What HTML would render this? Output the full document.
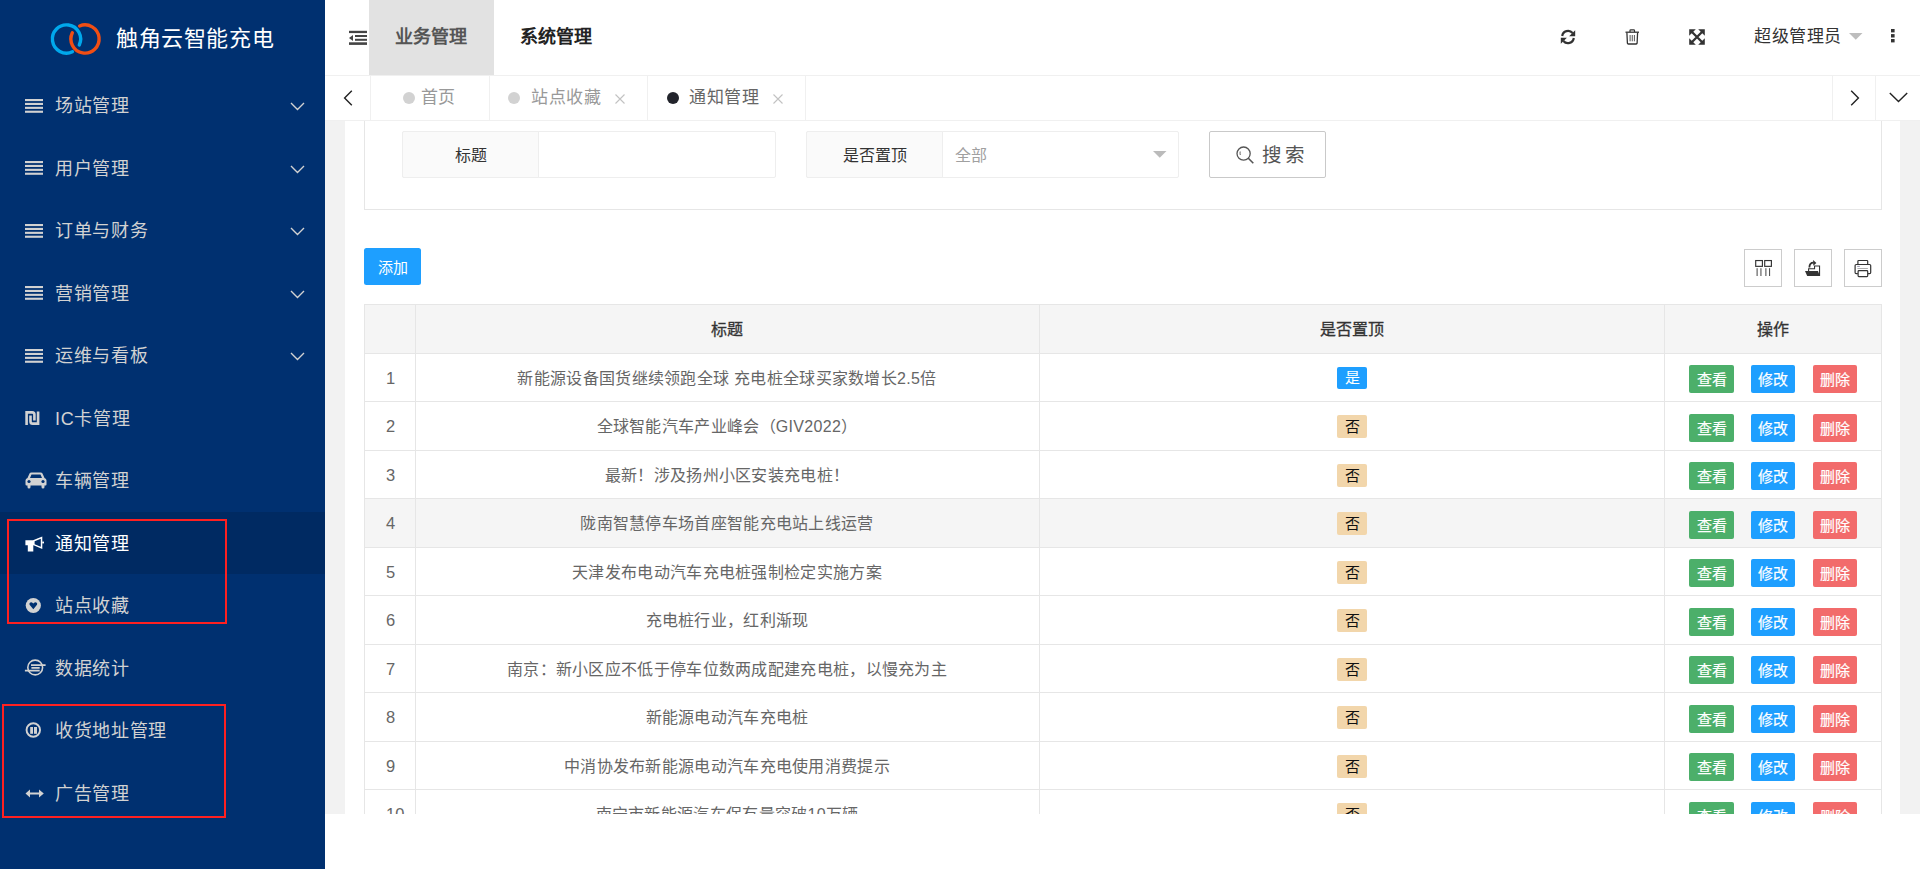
<!DOCTYPE html><html lang="zh-CN"><head><meta charset="utf-8"><style>
*{box-sizing:border-box;margin:0;padding:0}
html,body{width:1920px;height:869px;overflow:hidden;background:#fff;font-family:"Liberation Sans",sans-serif;}
.abs{position:absolute}
#side{position:absolute;left:0;top:0;width:325px;height:869px;background:#003070;}
.logo-t{position:absolute;left:116px;top:23px;font-size:22px;letter-spacing:0.6px;line-height:32px;color:#fff;white-space:nowrap}
.mi{position:absolute;left:0;width:325px;height:62.5px;}
.mi .t{position:absolute;left:55px;top:1px;line-height:62.5px;font-size:18px;letter-spacing:0.7px;color:#d2d2d2;white-space:nowrap}
.mi svg{position:absolute}
.mi.act{background:#002a62}
.mi.act .t{color:#fff}
.redbox{position:absolute;border:2px solid #ff2020}
#hdr{position:absolute;left:325px;top:0;width:1595px;height:75px;background:#fff}
#tabs{position:absolute;left:325px;top:75px;width:1595px;height:46px;background:#fff;border-top:1px solid #f0f0f0;border-bottom:1px solid #f0f0f0}
#main{position:absolute;left:325px;top:121px;width:1595px;height:693px;background:#f2f2f2;overflow:hidden}
#card{position:absolute;left:20px;top:0;width:1555px;height:693px;background:#fff;overflow:hidden}
.t1{position:absolute;white-space:nowrap}
</style></head><body>
<div id="side">
<svg class="abs" style="left:0;top:0" width="120" height="74" viewBox="0 0 120 74">
<path d="M72.46 51.78 A14.1 14.1 0 1 1 79.28 44.96" fill="none" stroke="#00a8ec" stroke-width="3.4" stroke-linecap="round"/>
<path d="M79.60 25.97 A14.1 14.1 0 1 1 72.33 32.82" fill="none" stroke="#f04e14" stroke-width="3.4" stroke-linecap="round"/>
</svg>
<div class="logo-t">触角云智能充电</div>
<div class="mi" style="top:74.0px"><svg style="left:25px;top:24.5px" width="18" height="14" viewBox="0 0 18 14"><rect x="0" y="0" width="18" height="2.1" fill="#d2d2d2"/><rect x="0" y="3.9" width="18" height="2.1" fill="#d2d2d2"/><rect x="0" y="7.8" width="18" height="2.1" fill="#d2d2d2"/><rect x="0" y="11.7" width="18" height="2.1" fill="#d2d2d2"/></svg><span class="t">场站管理</span><svg style="left:289px;top:27px" width="17" height="10" viewBox="0 0 17 10"><path d="M2 2 L8.5 8.5 L15 2" fill="none" stroke="#d2d2d2" stroke-width="1.4"/></svg></div>
<div class="mi" style="top:136.5px"><svg style="left:25px;top:24.5px" width="18" height="14" viewBox="0 0 18 14"><rect x="0" y="0" width="18" height="2.1" fill="#d2d2d2"/><rect x="0" y="3.9" width="18" height="2.1" fill="#d2d2d2"/><rect x="0" y="7.8" width="18" height="2.1" fill="#d2d2d2"/><rect x="0" y="11.7" width="18" height="2.1" fill="#d2d2d2"/></svg><span class="t">用户管理</span><svg style="left:289px;top:27px" width="17" height="10" viewBox="0 0 17 10"><path d="M2 2 L8.5 8.5 L15 2" fill="none" stroke="#d2d2d2" stroke-width="1.4"/></svg></div>
<div class="mi" style="top:199.0px"><svg style="left:25px;top:24.5px" width="18" height="14" viewBox="0 0 18 14"><rect x="0" y="0" width="18" height="2.1" fill="#d2d2d2"/><rect x="0" y="3.9" width="18" height="2.1" fill="#d2d2d2"/><rect x="0" y="7.8" width="18" height="2.1" fill="#d2d2d2"/><rect x="0" y="11.7" width="18" height="2.1" fill="#d2d2d2"/></svg><span class="t">订单与财务</span><svg style="left:289px;top:27px" width="17" height="10" viewBox="0 0 17 10"><path d="M2 2 L8.5 8.5 L15 2" fill="none" stroke="#d2d2d2" stroke-width="1.4"/></svg></div>
<div class="mi" style="top:261.5px"><svg style="left:25px;top:24.5px" width="18" height="14" viewBox="0 0 18 14"><rect x="0" y="0" width="18" height="2.1" fill="#d2d2d2"/><rect x="0" y="3.9" width="18" height="2.1" fill="#d2d2d2"/><rect x="0" y="7.8" width="18" height="2.1" fill="#d2d2d2"/><rect x="0" y="11.7" width="18" height="2.1" fill="#d2d2d2"/></svg><span class="t">营销管理</span><svg style="left:289px;top:27px" width="17" height="10" viewBox="0 0 17 10"><path d="M2 2 L8.5 8.5 L15 2" fill="none" stroke="#d2d2d2" stroke-width="1.4"/></svg></div>
<div class="mi" style="top:324.0px"><svg style="left:25px;top:24.5px" width="18" height="14" viewBox="0 0 18 14"><rect x="0" y="0" width="18" height="2.1" fill="#d2d2d2"/><rect x="0" y="3.9" width="18" height="2.1" fill="#d2d2d2"/><rect x="0" y="7.8" width="18" height="2.1" fill="#d2d2d2"/><rect x="0" y="11.7" width="18" height="2.1" fill="#d2d2d2"/></svg><span class="t">运维与看板</span><svg style="left:289px;top:27px" width="17" height="10" viewBox="0 0 17 10"><path d="M2 2 L8.5 8.5 L15 2" fill="none" stroke="#d2d2d2" stroke-width="1.4"/></svg></div>
<div class="mi" style="top:386.5px"><svg style="left:24.5px;top:24.3px" width="15" height="15" viewBox="0 0 15 15"><path d="M1.6 14 V1.4 H7.2 Q9.4 1.4 9.4 3.6 V9.6" fill="none" stroke="#d2d2d2" stroke-width="2.6"/><path d="M13.1 0.4 V12.6 H7.7 Q5.5 12.6 5.5 10.4 V4.4" fill="none" stroke="#d2d2d2" stroke-width="2.6"/></svg><span class="t">IC卡管理</span></div>
<div class="mi" style="top:449.0px"><svg style="left:24.5px;top:23px" width="22" height="17" viewBox="0 0 22 17"><path d="M4.5 1.5 Q5 0.5 6.5 0.5 H15.5 Q17 0.5 17.5 1.5 L19.5 6 Q21.5 6.5 21.5 8.5 V12.5 Q21.5 13.5 20.5 13.5 H19.5 V15 Q19.5 16.5 18 16.5 Q16.5 16.5 16.5 15 V13.5 H5.5 V15 Q5.5 16.5 4 16.5 Q2.5 16.5 2.5 15 V13.5 H1.5 Q0.5 13.5 0.5 12.5 V8.5 Q0.5 6.5 2.5 6 Z M6.5 2.5 L5 6 H17 L15.5 2.5 Z" fill="#d2d2d2" fill-rule="evenodd"/><circle cx="4" cy="9.5" r="1.6" fill="#003070"/><circle cx="18" cy="9.5" r="1.6" fill="#003070"/></svg><span class="t">车辆管理</span></div>
<div class="mi act" style="top:511.5px"><svg style="left:24.5px;top:23px" width="20" height="18" viewBox="0 0 20 18"><path d="M0.4 5.2 H8 L17.3 1.4 V14.1 L8.6 10.3 H8.3 V16.5 H2.8 V10.3 H0.4 Z M9.6 6.3 V9.2 L15.8 11.8 V3.7 Z" fill="#fff" fill-rule="evenodd"/><rect x="17.2" y="6.6" width="1.8" height="1.8" fill="#fff"/></svg><span class="t">通知管理</span></div>
<div class="mi" style="top:574.0px"><svg style="left:24.5px;top:23px" width="17" height="17" viewBox="0 0 17 17"><circle cx="8.3" cy="8.5" r="7.6" fill="#d2d2d2"/><path d="M8.3 12.2 L4.6 7.8 Q4 6.6 4.9 5.7 Q5.9 4.9 7 5.5 L8.3 6.5 L9.6 5.5 Q10.7 4.9 11.7 5.7 Q12.6 6.6 12 7.8 Z" fill="#003070"/></svg><span class="t">站点收藏</span></div>
<div class="mi" style="top:636.5px"><svg style="left:18px;top:15.5px" width="34" height="30" viewBox="0 0 34 30"><circle cx="17.2" cy="15.5" r="7.4" fill="none" stroke="#d2d2d2" stroke-width="1.6"/><path d="M13 13.1 H27.6 M13.4 15.9 H21.7 M6.9 18.6 H21.7" stroke="#d2d2d2" stroke-width="1.6"/></svg><span class="t">数据统计</span></div>
<div class="mi" style="top:699.0px"><svg style="left:24.5px;top:23px" width="17" height="17" viewBox="0 0 17 17"><circle cx="8.3" cy="8" r="6.75" fill="none" stroke="#d2d2d2" stroke-width="1.9"/><rect x="5.2" y="5" width="2.8" height="6.8" fill="#d2d2d2"/><rect x="9" y="5" width="3" height="6.8" fill="#d2d2d2"/></svg><span class="t">收货地址管理</span></div>
<div class="mi" style="top:761.5px"><svg style="left:24.5px;top:27px" width="20" height="9" viewBox="0 0 20 9"><path d="M0.5 4.5 L5 0.6 V3.4 H14 V0.6 L18.8 4.5 L14 8.4 V5.6 H5 V8.4 Z" fill="#d2d2d2"/></svg><span class="t">广告管理</span></div>
<div class="redbox" style="left:7px;top:519px;width:220px;height:105px"></div>
<div class="redbox" style="left:2px;top:704px;width:224px;height:114px"></div>
</div>
<div id="hdr">
<svg class="abs" style="left:24px;top:30px" width="19" height="16" viewBox="0 0 19 16"><rect x="0" y="0.8" width="18" height="2.3" fill="#444"/><rect x="6" y="5" width="12" height="2" fill="#444"/><rect x="6" y="8.8" width="12" height="2" fill="#444"/><rect x="0" y="12.3" width="18" height="2.6" fill="#444"/><path d="M0 8 L4 5 V11 Z" fill="#444"/></svg>
<div class="abs" style="left:44px;top:0;width:125px;height:75px;background:#e2e2e2"></div>
<div class="t1" style="left:70px;top:0;line-height:74px;font-size:18px;font-weight:bold;color:#555">业务管理</div>
<div class="t1" style="left:195px;top:0;line-height:74px;font-size:18px;font-weight:bold;color:#222">系统管理</div>
<svg class="abs" style="left:1235px;top:28.5px" width="16" height="16" viewBox="0 0 16 16"><path d="M2.2 7 A5.9 5.9 0 0 1 12.6 4" fill="none" stroke="#333" stroke-width="2.2"/><path d="M15.2 1.2 V7.3 H9.1 Z" fill="#333"/><path d="M13.8 9 A5.9 5.9 0 0 1 3.4 12" fill="none" stroke="#333" stroke-width="2.2"/><path d="M0.8 14.8 V8.7 H6.9 Z" fill="#333"/></svg>
<svg class="abs" style="left:1300px;top:28.5px" width="15" height="16" viewBox="0 0 15 16"><path d="M0.5 3.2 H14" stroke="#333" stroke-width="1.3"/><path d="M5 3 V1.6 Q5 0.8 5.8 0.8 H8.7 Q9.5 0.8 9.5 1.6 V3" fill="none" stroke="#333" stroke-width="1.2"/><path d="M1.9 3.5 L2.4 14.2 Q2.5 15 3.3 15 H11.2 Q12 15 12.1 14.2 L12.6 3.5" fill="none" stroke="#333" stroke-width="1.3"/><path d="M5.1 6 V12.3 M7.25 6 V12.3 M9.4 6 V12.3" stroke="#555" stroke-width="1"/></svg>
<svg class="abs" style="left:1364px;top:28.5px" width="16" height="16" viewBox="0 0 16 16"><path d="M0.2 0.2 H6.8 L0.2 6.8 Z M15.8 0.2 V6.8 L9.2 0.2 Z M0.2 15.8 V9.2 L6.8 15.8 Z M15.8 15.8 H9.2 L15.8 9.2 Z" fill="#333"/><path d="M2.5 2.5 L13.5 13.5 M13.5 2.5 L2.5 13.5" stroke="#333" stroke-width="2.3"/></svg>
<div class="t1" style="left:1429px;top:0;line-height:74px;font-size:17px;letter-spacing:0.5px;color:#333">超级管理员</div>
<svg class="abs" style="left:1524px;top:33px" width="14" height="7" viewBox="0 0 14 7"><path d="M0 0 H13.5 L6.75 6.8 Z" fill="#bdbdbd"/></svg>
<svg class="abs" style="left:1566px;top:29px" width="4" height="14" viewBox="0 0 4 14"><rect x="0" y="0" width="3.6" height="3.4" fill="#333"/><rect x="0" y="5.1" width="3.6" height="3.4" fill="#333"/><rect x="0" y="10" width="3.6" height="3.4" fill="#333"/></svg>
</div>
<div id="tabs">
<div class="abs" style="left:45px;top:0;width:1px;height:44px;background:#f0f0f0"></div>
<div class="abs" style="left:164px;top:0;width:1px;height:44px;background:#f0f0f0"></div>
<div class="abs" style="left:322px;top:0;width:1px;height:44px;background:#f0f0f0"></div>
<div class="abs" style="left:480px;top:0;width:1px;height:44px;background:#f0f0f0"></div>
<div class="abs" style="left:1507px;top:0;width:1px;height:44px;background:#f0f0f0"></div>
<div class="abs" style="left:1550px;top:0;width:1px;height:44px;background:#f0f0f0"></div>
<svg class="abs" style="left:18px;top:14px" width="10" height="16" viewBox="0 0 10 16"><path d="M8.8 0.8 L1.6 8 L8.8 15.2" fill="none" stroke="#222" stroke-width="1.4"/></svg>
<div class="abs" style="left:78px;top:15.5px;width:12px;height:12px;border-radius:50%;background:#d2d2d2"></div><div class="t1" style="left:95.5px;top:0;line-height:43px;font-size:17px;letter-spacing:0.6px;color:#999">首页</div>
<div class="abs" style="left:183px;top:15.5px;width:12px;height:12px;border-radius:50%;background:#d2d2d2"></div><div class="t1" style="left:206px;top:0;line-height:43px;font-size:17px;letter-spacing:0.6px;color:#999">站点收藏</div><svg class="abs" style="left:290px;top:17.5px" width="10" height="10" viewBox="0 0 10 10"><path d="M0.5 0.5 L9.5 9.5 M9.5 0.5 L0.5 9.5" stroke="#c2c2c2" stroke-width="1.1"/></svg>
<div class="abs" style="left:342px;top:15.5px;width:12px;height:12px;border-radius:50%;background:#22242c"></div><div class="t1" style="left:364px;top:0;line-height:43px;font-size:17px;letter-spacing:0.6px;color:#666">通知管理</div><svg class="abs" style="left:448px;top:17.5px" width="10" height="10" viewBox="0 0 10 10"><path d="M0.5 0.5 L9.5 9.5 M9.5 0.5 L0.5 9.5" stroke="#c2c2c2" stroke-width="1.1"/></svg>
<svg class="abs" style="left:1525px;top:14px" width="10" height="16" viewBox="0 0 10 16"><path d="M1.2 0.8 L8.4 8 L1.2 15.2" fill="none" stroke="#222" stroke-width="1.4"/></svg>
<svg class="abs" style="left:1564px;top:16px" width="19" height="11" viewBox="0 0 19 11"><path d="M0.8 1 L9.5 9.6 L18.2 1" fill="none" stroke="#222" stroke-width="1.4"/></svg>
</div>
<div id="main"><div id="card">
<div class="abs" style="left:19px;top:-10px;width:1518px;height:99px;border:1px solid #e6e6e6"></div>
<div class="abs" style="left:57px;top:10px;width:374px;height:47px;border:1px solid #eee;border-radius:2px;background:#fff"></div>
<div class="abs" style="left:57px;top:10px;width:137px;height:47px;border:1px solid #eee;border-radius:2px 0 0 2px;background:#fafafa"></div>
<div class="t1" style="left:57px;top:10px;width:137px;text-align:center;line-height:50px;font-size:16px;color:#333">标题</div>
<div class="abs" style="left:461px;top:10px;width:373px;height:47px;border:1px solid #eee;border-radius:2px;background:#fff"></div>
<div class="abs" style="left:461px;top:10px;width:137px;height:47px;border:1px solid #eee;border-radius:2px 0 0 2px;background:#fafafa"></div>
<div class="t1" style="left:461px;top:10px;width:137px;text-align:center;line-height:50px;font-size:16px;color:#333">是否置顶</div>
<div class="t1" style="left:610px;top:10px;line-height:50px;font-size:16px;color:#a0a0a0">全部</div>
<svg class="abs" style="left:808px;top:30px" width="14" height="7" viewBox="0 0 14 7"><path d="M0 0 H13.5 L6.75 6.8 Z" fill="#bbb"/></svg>
<div class="abs" style="left:864px;top:10px;width:117px;height:47px;border:1px solid #c9c9c9;border-radius:2px;background:#fff"></div>
<svg class="abs" style="left:891px;top:25px" width="19" height="19" viewBox="0 0 19 19"><circle cx="7.6" cy="7.6" r="6.6" fill="none" stroke="#555" stroke-width="1.3"/><path d="M12.3 12.3 L17.3 17.3" stroke="#555" stroke-width="1.6"/><path d="M4.2 5.5 Q3.8 7 4.3 9" fill="none" stroke="#555" stroke-width="0.9"/></svg>
<div class="t1" style="left:917px;top:10px;line-height:49px;font-size:19.5px;letter-spacing:2.5px;color:#555">搜索</div>
<div class="abs" style="left:19px;top:127px;width:57px;height:37px;border-radius:2.5px;background:#1e9fff;color:#fff;font-size:15px;line-height:39px;text-align:center">添加</div>
<div class="abs" style="left:1399px;top:128px;width:38px;height:38px;border:1px solid #ccc"></div>
<div class="abs" style="left:1449px;top:128px;width:38px;height:38px;border:1px solid #ccc"></div>
<div class="abs" style="left:1499px;top:128px;width:38px;height:38px;border:1px solid #ccc"></div>
<svg class="abs" style="left:1405px;top:134px" width="26" height="26" viewBox="0 0 26 26"><rect x="5.7" y="5.55" width="6.7" height="5.8" fill="none" stroke="#333" stroke-width="1.15"/><rect x="14.7" y="5.55" width="6.7" height="5.8" fill="none" stroke="#333" stroke-width="1.15"/><path d="M7.1 13.2 V21 M10.95 13.2 V21 M15.9 13.2 V21 M19.6 13.2 V21" stroke="#444" stroke-width="1"/></svg>
<svg class="abs" style="left:1455px;top:134px" width="26" height="26" viewBox="0 0 26 26"><path d="M5 15.9 H18 L19.9 21.1 H7.2 Z" fill="#333"/><path d="M8.6 16 V13.75 H14.55 V11.05 H19.55 V21" fill="none" stroke="#333" stroke-width="1.1"/><path d="M9.4 12.6 Q9.4 7.7 13.6 7.7" fill="none" stroke="#333" stroke-width="1.8"/><path d="M13.1 4.9 L16.4 8 L13.3 10.8 Z" fill="#333"/></svg>
<svg class="abs" style="left:1505px;top:134px" width="26" height="26" viewBox="0 0 26 26"><path d="M7.9 9.2 V6.2 Q7.9 5.5 8.6 5.5 H17 Q17.7 5.5 17.7 6.2 V9.2" fill="none" stroke="#333" stroke-width="1.2"/><path d="M7.8 18.6 H6.2 Q5.1 18.6 5.1 17.5 V10.6 Q5.1 9.5 6.2 9.5 H19.6 Q20.7 9.5 20.7 10.6 V17.5 Q20.7 18.6 19.6 18.6 H18" fill="none" stroke="#333" stroke-width="1.2"/><rect x="8.1" y="15.6" width="9.6" height="6" rx="0.8" fill="none" stroke="#333" stroke-width="1.2"/><path d="M7.2 11.4 H9.8" stroke="#8a8aa8" stroke-width="0.9"/><path d="M7.4 13.5 H17.9" stroke="#999" stroke-width="0.8"/></svg>
<div class="abs" style="left:19px;top:183px;width:1518px;height:536.0px;">
<div class="abs" style="left:0;top:0;width:100%;height:48.5px;background:#f5f5f5"></div>
<div class="abs" style="left:0;top:194.14999999999998px;width:100%;height:48.55px;background:#f5f5f5"></div>
<div class="abs" style="left:0;top:0;width:100%;height:536.0px;border:1px solid #e6e6e6;border-bottom:none"></div>
<div class="abs" style="left:0;top:48.5px;width:100%;height:1px;background:#e6e6e6"></div>
<div class="abs" style="left:0;top:97.05px;width:100%;height:1px;background:#e6e6e6"></div>
<div class="abs" style="left:0;top:145.6px;width:100%;height:1px;background:#e6e6e6"></div>
<div class="abs" style="left:0;top:194.14999999999998px;width:100%;height:1px;background:#e6e6e6"></div>
<div class="abs" style="left:0;top:242.7px;width:100%;height:1px;background:#e6e6e6"></div>
<div class="abs" style="left:0;top:291.25px;width:100%;height:1px;background:#e6e6e6"></div>
<div class="abs" style="left:0;top:339.79999999999995px;width:100%;height:1px;background:#e6e6e6"></div>
<div class="abs" style="left:0;top:388.34999999999997px;width:100%;height:1px;background:#e6e6e6"></div>
<div class="abs" style="left:0;top:436.9px;width:100%;height:1px;background:#e6e6e6"></div>
<div class="abs" style="left:0;top:485.45px;width:100%;height:1px;background:#e6e6e6"></div>
<div class="abs" style="left:51px;top:0;width:1px;height:536.0px;background:#e6e6e6"></div>
<div class="abs" style="left:675px;top:0;width:1px;height:536.0px;background:#e6e6e6"></div>
<div class="abs" style="left:1300px;top:0;width:1px;height:536.0px;background:#e6e6e6"></div>
<div class="t1" style="left:51px;width:624px;top:0;line-height:51.5px;text-align:center;font-size:16px;-webkit-text-stroke:0.3px #333;color:#333">标题</div>
<div class="t1" style="left:675px;width:625px;top:0;line-height:51.5px;text-align:center;font-size:16px;-webkit-text-stroke:0.3px #333;color:#333">是否置顶</div>
<div class="t1" style="left:1300px;width:218px;top:0;line-height:51.5px;text-align:center;font-size:16px;-webkit-text-stroke:0.3px #333;color:#333">操作</div>
<div class="t1" style="left:22px;top:48.5px;line-height:50.55px;font-size:16.5px;color:#666">1</div>
<div class="t1" style="left:51px;width:624px;top:48.5px;line-height:51.05px;text-align:center;font-size:16px;letter-spacing:0.3px;color:#666">新能源设备国货继续领跑全球 充电桩全球买家数增长2.5倍</div>
<div class="abs" style="left:973px;top:63.0px;width:30px;height:22px;border-radius:2px;background:#1e9fff;color:#fff;font-size:15px;line-height:22px;text-align:center">是</div>
<div class="abs" style="left:1325px;top:61.0px;width:45px;height:28px;border-radius:2px;background:#4caf6a;color:#fff;font-size:15px;line-height:29px;text-align:center;-webkit-text-stroke:0.2px #fff">查看</div>
<div class="abs" style="left:1387px;top:61.0px;width:44px;height:28px;border-radius:2px;background:#1e9fff;color:#fff;font-size:15px;line-height:29px;text-align:center;-webkit-text-stroke:0.2px #fff">修改</div>
<div class="abs" style="left:1449px;top:61.0px;width:44px;height:28px;border-radius:2px;background:#f26b6b;color:#fff;font-size:15px;line-height:29px;text-align:center;-webkit-text-stroke:0.2px #fff">删除</div>
<div class="t1" style="left:22px;top:97.05px;line-height:50.55px;font-size:16.5px;color:#666">2</div>
<div class="t1" style="left:51px;width:624px;top:97.05px;line-height:51.05px;text-align:center;font-size:16px;letter-spacing:0.3px;color:#666">全球智能汽车产业峰会（GIV2022）</div>
<div class="abs" style="left:973px;top:111.05px;width:30px;height:23px;border-radius:2px;background:#f2d6ab;color:#111;font-size:15px;line-height:23px;text-align:center">否</div>
<div class="abs" style="left:1325px;top:109.55px;width:45px;height:28px;border-radius:2px;background:#4caf6a;color:#fff;font-size:15px;line-height:29px;text-align:center;-webkit-text-stroke:0.2px #fff">查看</div>
<div class="abs" style="left:1387px;top:109.55px;width:44px;height:28px;border-radius:2px;background:#1e9fff;color:#fff;font-size:15px;line-height:29px;text-align:center;-webkit-text-stroke:0.2px #fff">修改</div>
<div class="abs" style="left:1449px;top:109.55px;width:44px;height:28px;border-radius:2px;background:#f26b6b;color:#fff;font-size:15px;line-height:29px;text-align:center;-webkit-text-stroke:0.2px #fff">删除</div>
<div class="t1" style="left:22px;top:145.6px;line-height:50.55px;font-size:16.5px;color:#666">3</div>
<div class="t1" style="left:51px;width:624px;top:145.6px;line-height:51.05px;text-align:center;font-size:16px;letter-spacing:0.3px;color:#666">最新！涉及扬州小区安装充电桩！</div>
<div class="abs" style="left:973px;top:159.6px;width:30px;height:23px;border-radius:2px;background:#f2d6ab;color:#111;font-size:15px;line-height:23px;text-align:center">否</div>
<div class="abs" style="left:1325px;top:158.1px;width:45px;height:28px;border-radius:2px;background:#4caf6a;color:#fff;font-size:15px;line-height:29px;text-align:center;-webkit-text-stroke:0.2px #fff">查看</div>
<div class="abs" style="left:1387px;top:158.1px;width:44px;height:28px;border-radius:2px;background:#1e9fff;color:#fff;font-size:15px;line-height:29px;text-align:center;-webkit-text-stroke:0.2px #fff">修改</div>
<div class="abs" style="left:1449px;top:158.1px;width:44px;height:28px;border-radius:2px;background:#f26b6b;color:#fff;font-size:15px;line-height:29px;text-align:center;-webkit-text-stroke:0.2px #fff">删除</div>
<div class="t1" style="left:22px;top:194.14999999999998px;line-height:50.55px;font-size:16.5px;color:#666">4</div>
<div class="t1" style="left:51px;width:624px;top:194.14999999999998px;line-height:51.05px;text-align:center;font-size:16px;letter-spacing:0.3px;color:#666">陇南智慧停车场首座智能充电站上线运营</div>
<div class="abs" style="left:973px;top:208.14999999999998px;width:30px;height:23px;border-radius:2px;background:#f2d6ab;color:#111;font-size:15px;line-height:23px;text-align:center">否</div>
<div class="abs" style="left:1325px;top:206.64999999999998px;width:45px;height:28px;border-radius:2px;background:#4caf6a;color:#fff;font-size:15px;line-height:29px;text-align:center;-webkit-text-stroke:0.2px #fff">查看</div>
<div class="abs" style="left:1387px;top:206.64999999999998px;width:44px;height:28px;border-radius:2px;background:#1e9fff;color:#fff;font-size:15px;line-height:29px;text-align:center;-webkit-text-stroke:0.2px #fff">修改</div>
<div class="abs" style="left:1449px;top:206.64999999999998px;width:44px;height:28px;border-radius:2px;background:#f26b6b;color:#fff;font-size:15px;line-height:29px;text-align:center;-webkit-text-stroke:0.2px #fff">删除</div>
<div class="t1" style="left:22px;top:242.7px;line-height:50.55px;font-size:16.5px;color:#666">5</div>
<div class="t1" style="left:51px;width:624px;top:242.7px;line-height:51.05px;text-align:center;font-size:16px;letter-spacing:0.3px;color:#666">天津发布电动汽车充电桩强制检定实施方案</div>
<div class="abs" style="left:973px;top:256.7px;width:30px;height:23px;border-radius:2px;background:#f2d6ab;color:#111;font-size:15px;line-height:23px;text-align:center">否</div>
<div class="abs" style="left:1325px;top:255.2px;width:45px;height:28px;border-radius:2px;background:#4caf6a;color:#fff;font-size:15px;line-height:29px;text-align:center;-webkit-text-stroke:0.2px #fff">查看</div>
<div class="abs" style="left:1387px;top:255.2px;width:44px;height:28px;border-radius:2px;background:#1e9fff;color:#fff;font-size:15px;line-height:29px;text-align:center;-webkit-text-stroke:0.2px #fff">修改</div>
<div class="abs" style="left:1449px;top:255.2px;width:44px;height:28px;border-radius:2px;background:#f26b6b;color:#fff;font-size:15px;line-height:29px;text-align:center;-webkit-text-stroke:0.2px #fff">删除</div>
<div class="t1" style="left:22px;top:291.25px;line-height:50.55px;font-size:16.5px;color:#666">6</div>
<div class="t1" style="left:51px;width:624px;top:291.25px;line-height:51.05px;text-align:center;font-size:16px;letter-spacing:0.3px;color:#666">充电桩行业，红利渐现</div>
<div class="abs" style="left:973px;top:305.25px;width:30px;height:23px;border-radius:2px;background:#f2d6ab;color:#111;font-size:15px;line-height:23px;text-align:center">否</div>
<div class="abs" style="left:1325px;top:303.75px;width:45px;height:28px;border-radius:2px;background:#4caf6a;color:#fff;font-size:15px;line-height:29px;text-align:center;-webkit-text-stroke:0.2px #fff">查看</div>
<div class="abs" style="left:1387px;top:303.75px;width:44px;height:28px;border-radius:2px;background:#1e9fff;color:#fff;font-size:15px;line-height:29px;text-align:center;-webkit-text-stroke:0.2px #fff">修改</div>
<div class="abs" style="left:1449px;top:303.75px;width:44px;height:28px;border-radius:2px;background:#f26b6b;color:#fff;font-size:15px;line-height:29px;text-align:center;-webkit-text-stroke:0.2px #fff">删除</div>
<div class="t1" style="left:22px;top:339.79999999999995px;line-height:50.55px;font-size:16.5px;color:#666">7</div>
<div class="t1" style="left:51px;width:624px;top:339.79999999999995px;line-height:51.05px;text-align:center;font-size:16px;letter-spacing:0.3px;color:#666">南京：新小区应不低于停车位数两成配建充电桩，以慢充为主</div>
<div class="abs" style="left:973px;top:353.79999999999995px;width:30px;height:23px;border-radius:2px;background:#f2d6ab;color:#111;font-size:15px;line-height:23px;text-align:center">否</div>
<div class="abs" style="left:1325px;top:352.29999999999995px;width:45px;height:28px;border-radius:2px;background:#4caf6a;color:#fff;font-size:15px;line-height:29px;text-align:center;-webkit-text-stroke:0.2px #fff">查看</div>
<div class="abs" style="left:1387px;top:352.29999999999995px;width:44px;height:28px;border-radius:2px;background:#1e9fff;color:#fff;font-size:15px;line-height:29px;text-align:center;-webkit-text-stroke:0.2px #fff">修改</div>
<div class="abs" style="left:1449px;top:352.29999999999995px;width:44px;height:28px;border-radius:2px;background:#f26b6b;color:#fff;font-size:15px;line-height:29px;text-align:center;-webkit-text-stroke:0.2px #fff">删除</div>
<div class="t1" style="left:22px;top:388.34999999999997px;line-height:50.55px;font-size:16.5px;color:#666">8</div>
<div class="t1" style="left:51px;width:624px;top:388.34999999999997px;line-height:51.05px;text-align:center;font-size:16px;letter-spacing:0.3px;color:#666">新能源电动汽车充电桩</div>
<div class="abs" style="left:973px;top:402.34999999999997px;width:30px;height:23px;border-radius:2px;background:#f2d6ab;color:#111;font-size:15px;line-height:23px;text-align:center">否</div>
<div class="abs" style="left:1325px;top:400.84999999999997px;width:45px;height:28px;border-radius:2px;background:#4caf6a;color:#fff;font-size:15px;line-height:29px;text-align:center;-webkit-text-stroke:0.2px #fff">查看</div>
<div class="abs" style="left:1387px;top:400.84999999999997px;width:44px;height:28px;border-radius:2px;background:#1e9fff;color:#fff;font-size:15px;line-height:29px;text-align:center;-webkit-text-stroke:0.2px #fff">修改</div>
<div class="abs" style="left:1449px;top:400.84999999999997px;width:44px;height:28px;border-radius:2px;background:#f26b6b;color:#fff;font-size:15px;line-height:29px;text-align:center;-webkit-text-stroke:0.2px #fff">删除</div>
<div class="t1" style="left:22px;top:436.9px;line-height:50.55px;font-size:16.5px;color:#666">9</div>
<div class="t1" style="left:51px;width:624px;top:436.9px;line-height:51.05px;text-align:center;font-size:16px;letter-spacing:0.3px;color:#666">中消协发布新能源电动汽车充电使用消费提示</div>
<div class="abs" style="left:973px;top:450.9px;width:30px;height:23px;border-radius:2px;background:#f2d6ab;color:#111;font-size:15px;line-height:23px;text-align:center">否</div>
<div class="abs" style="left:1325px;top:449.4px;width:45px;height:28px;border-radius:2px;background:#4caf6a;color:#fff;font-size:15px;line-height:29px;text-align:center;-webkit-text-stroke:0.2px #fff">查看</div>
<div class="abs" style="left:1387px;top:449.4px;width:44px;height:28px;border-radius:2px;background:#1e9fff;color:#fff;font-size:15px;line-height:29px;text-align:center;-webkit-text-stroke:0.2px #fff">修改</div>
<div class="abs" style="left:1449px;top:449.4px;width:44px;height:28px;border-radius:2px;background:#f26b6b;color:#fff;font-size:15px;line-height:29px;text-align:center;-webkit-text-stroke:0.2px #fff">删除</div>
<div class="t1" style="left:22px;top:485.45px;line-height:50.55px;font-size:16.5px;color:#666">10</div>
<div class="t1" style="left:51px;width:624px;top:485.45px;line-height:51.05px;text-align:center;font-size:16px;letter-spacing:0.3px;color:#666">南宁市新能源汽车保有量突破10万辆</div>
<div class="abs" style="left:973px;top:499.45px;width:30px;height:23px;border-radius:2px;background:#f2d6ab;color:#111;font-size:15px;line-height:23px;text-align:center">否</div>
<div class="abs" style="left:1325px;top:497.95px;width:45px;height:28px;border-radius:2px;background:#4caf6a;color:#fff;font-size:15px;line-height:29px;text-align:center;-webkit-text-stroke:0.2px #fff">查看</div>
<div class="abs" style="left:1387px;top:497.95px;width:44px;height:28px;border-radius:2px;background:#1e9fff;color:#fff;font-size:15px;line-height:29px;text-align:center;-webkit-text-stroke:0.2px #fff">修改</div>
<div class="abs" style="left:1449px;top:497.95px;width:44px;height:28px;border-radius:2px;background:#f26b6b;color:#fff;font-size:15px;line-height:29px;text-align:center;-webkit-text-stroke:0.2px #fff">删除</div>
</div>
</div></div>
</body></html>
